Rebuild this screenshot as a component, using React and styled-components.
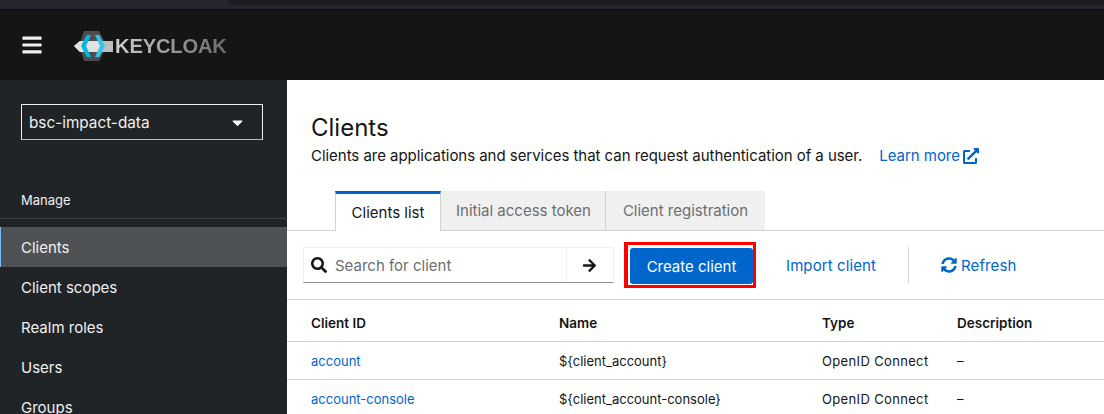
import styled, { createGlobalStyle } from "styled-components";
import { FaBars, FaCaretDown, FaSearch, FaArrowRight, FaExternalLinkAlt, FaSyncAlt } from "react-icons/fa";

const GlobalStyle = createGlobalStyle`
  html, body {
    margin: 0;
    padding: 0;
    height: 414px;
    overflow: hidden;
    background: #fff;
    font-family: "Inter", "Liberation Sans", sans-serif;
    font-size: 15px;
    color: #151515;
  }
  * { box-sizing: border-box; }
`;

const Page = styled.div`
  width: 1104px;
  height: 414px;
  display: flex;
  flex-direction: column;
  overflow: hidden;
`;

const BrowserStrip = styled.div`
  height: 10px;
  flex: none;
  background: #26262e;
  border-bottom: 1px solid #0c0c0c;
  display: flex;
  justify-content: flex-end;
`;

const BrowserTab = styled.div`
  width: 876px;
  height: 5px;
  background: #1c1c22;
  border-bottom-left-radius: 5px;
`;

const Masthead = styled.header`
  height: 70px;
  flex: none;
  background: #151515;
  display: flex;
  align-items: center;
  padding-left: 21px;
  gap: 31px;
  color: #f0f0f0;
`;

const Logo = styled.div`
  display: flex;
  align-items: center;
  padding-top: 3px;
`;

const LogoText = styled.span`
  font-family: "Liberation Sans", sans-serif;
  font-weight: 700;
  font-size: 20.2px;
  letter-spacing: -0.2px;
  background: linear-gradient(90deg, #cfcfcf 0%, #9a9a9a 50%, #6a6a6a 100%);
  -webkit-background-clip: text;
  background-clip: text;
  color: transparent;
  margin-left: 1px;
`;

const Body = styled.div`
  flex: 1;
  display: flex;
  min-height: 0;
`;

const Sidebar = styled.aside`
  width: 287px;
  flex: none;
  background: #212427;
  padding-top: 24px;
  color: #f0f0f0;
`;

const RealmSelect = styled.div`
  width: 242px;
  height: 36px;
  margin-left: 21px;
  border: 1px solid #f0f0f0;
  border-bottom-color: #b8bbbe;
  display: flex;
  align-items: center;
  justify-content: space-between;
  padding: 0 16px 0 7px;
  font-size: 15.3px;
  svg { font-size: 17px; color: #fff; }
`;

const NavGroupTitle = styled.div`
  margin-top: 48px;
  height: 31px;
  padding: 4px 0 0 21px;
  font-size: 13px;
  border-bottom: 1px solid #3c3f42;
`;

const NavList = styled.nav`
  margin-top: 8px;
  display: flex;
  flex-direction: column;
`;

const NavItem = styled.a`
  height: 40px;
  display: flex;
  align-items: center;
  padding-left: ${(p) => (p.$active ? "20px" : "21px")};
  font-size: 15px;
  background: ${(p) => (p.$active ? "#4f5255" : "transparent")};
  border-left: ${(p) => (p.$active ? "1px solid #73bcf7" : "none")};
`;

const Main = styled.main`
  flex: 1;
  min-width: 0;
  background: #fff;
`;

const PageHead = styled.section`
  padding: 33px 24px 0;
  height: 111px;
`;

const Title = styled.h1`
  margin: 0;
  font-size: 24px;
  line-height: 29px;
  font-weight: 400;
`;

const Subtitle = styled.p`
  margin: 3px 0 0;
  font-size: 15px;
  line-height: 22px;
  letter-spacing: -0.04px;
  display: flex;
  align-items: center;
`;

const LearnMore = styled.a`
  color: #06c;
  margin-left: 17px;
  display: inline-flex;
  align-items: center;
  gap: 3px;
  svg { font-size: 16px; }
`;

const Tabs = styled.div`
  height: 40px;
  padding-left: 48px;
  display: flex;
  border-bottom: 1px solid #d2d2d2;
`;

const Tab = styled.div`
  width: ${(p) => p.$width}px;
  height: ${(p) => (p.$active ? "40px" : "39px")};
  display: flex;
  align-items: center;
  justify-content: center;
  font-size: 15px;
  background: ${(p) => (p.$active ? "#fff" : "#f0f0f0")};
  color: ${(p) => (p.$active ? "#151515" : "#6a6e73")};
  border-top: ${(p) => (p.$active ? "3px solid #06c" : "none")};
  border-left: 1px solid ${(p) => (p.$active ? "#d2d2d2" : "transparent")};
  border-right: 1px solid ${(p) => (p.$last ? "transparent" : "#d2d2d2")};
`;

const Toolbar = styled.div`
  height: 69px;
  padding-left: 16px;
  display: flex;
  align-items: center;
  border-bottom: 1px solid #d2d2d2;
`;

const SearchGroup = styled.div`
  width: 311px;
  height: 36px;
  display: flex;
  border: 1px solid #f0f0f0;
  border-bottom-color: #8a8d90;
`;

const SearchField = styled.div`
  flex: 1;
  display: flex;
  align-items: center;
  padding-left: 7px;
  gap: 8px;
  color: #6a6e73;
  font-size: 15px;
  svg { font-size: 16px; color: #151515; }
`;

const SearchButton = styled.div`
  width: 47px;
  padding-right: 2px;
  display: flex;
  align-items: center;
  justify-content: center;
  border-left: 1px solid #f0f0f0;
  svg { font-size: 15px; color: #151515; }
`;

/* the red box is drawn on the screenshot itself, square and a bit lopsided */
const Highlight = styled.div`
  margin-left: 10px;
  padding: 3px 0 1px 2px;
  border: 3px solid #f00;
  border-left-width: 4px;
  display: flex;
`;

const PrimaryButton = styled.button`
  width: 123px;
  height: 36px;
  background: #06c;
  border: none;
  border-radius: 3px;
  color: #fff;
  font: inherit;
  font-size: 15px;
`;

const LinkButton = styled.a`
  color: #06c;
  font-size: 15px;
  letter-spacing: 0.1px;
  display: inline-flex;
  align-items: center;
  gap: 4px;
  margin-left: ${(p) => p.$left}px;
  svg { font-size: 16px; }
`;

const Separator = styled.div`
  width: 1px;
  height: 36px;
  background: #d2d2d2;
  margin-left: 32px;
`;

const Table = styled.div`
  display: flex;
  flex-direction: column;
`;

const Row = styled.div`
  display: grid;
  grid-template-columns: 248px 263px 135px 1fr;
  padding-left: 24px;
  align-items: center;
  height: 38px;
  border-bottom: 1px solid #d2d2d2;
  font-size: 13px;
`;

const HeadRow = styled(Row)`
  height: 42px;
  padding-top: 4px;
  font-size: 13.5px;
  font-weight: 600;
`;

const ClientLink = styled.a`
  color: #06c;
`;

const TypeCell = styled.span`
  letter-spacing: 0.35px;
`;

const navItems = ["Clients", "Client scopes", "Realm roles", "Users", "Groups"];

const clients = [
  { id: "account", name: "${client_account}", type: "OpenID Connect", description: "–" },
  { id: "account-console", name: "${client_account-console}", type: "OpenID Connect", description: "–" },
];

function KeycloakMark() {
  return (
    <svg width="40" height="31" viewBox="0 0 40 31">
      <polygon points="10,0 25,0 33,15 25,30 10,30 5,15" fill="#4d4d4d" />
      <polygon points="0,15 6,10 39,10 39,21 6,21" fill="#bdbdbd" />
      <polygon points="0,15 6,10 26,10 26,21 6,21" fill="#e2e2e2" />
      <polygon points="12.7,4 17,4 12,15 17,26 12.7,26 7,15" fill="#00b8e3" />
      <polygon points="21,4 25.3,4 31,15 25.3,26 21,26 26,15" fill="#33c6e9" />
    </svg>
  );
}

export default function App() {
  return (
    <Page>
      <GlobalStyle />
      <BrowserStrip>
        <BrowserTab />
      </BrowserStrip>
      <Masthead>
        <FaBars size={22} />
        <Logo>
          <KeycloakMark />
          <LogoText>KEYCLOAK</LogoText>
        </Logo>
      </Masthead>
      <Body>
        <Sidebar>
          <RealmSelect>
            bsc-impact-data
            <FaCaretDown />
          </RealmSelect>
          <NavGroupTitle>Manage</NavGroupTitle>
          <NavList>
            {navItems.map((item) => (
              <NavItem key={item} $active={item === "Clients"}>{item}</NavItem>
            ))}
          </NavList>
        </Sidebar>
        <Main>
          <PageHead>
            <Title>Clients</Title>
            <Subtitle>
              Clients are applications and services that can request authentication of a user.
              <LearnMore>Learn more <FaExternalLinkAlt /></LearnMore>
            </Subtitle>
          </PageHead>
          <Tabs>
            <Tab $active $width={106}>Clients list</Tab>
            <Tab $width={165}>Initial access token</Tab>
            <Tab $last $width={159}>Client registration</Tab>
          </Tabs>
          <Toolbar>
            <SearchGroup>
              <SearchField>
                <FaSearch />
                Search for client
              </SearchField>
              <SearchButton><FaArrowRight /></SearchButton>
            </SearchGroup>
            <Highlight>
              <PrimaryButton>Create client</PrimaryButton>
            </Highlight>
            <LinkButton $left={30}>Import client</LinkButton>
            <Separator />
            <LinkButton $left={32}><FaSyncAlt /> Refresh</LinkButton>
          </Toolbar>
          <Table>
            <HeadRow>
              <span>Client ID</span>
              <span>Name</span>
              <span>Type</span>
              <span>Description</span>
            </HeadRow>
            {clients.map((c) => (
              <Row key={c.id}>
                <ClientLink>{c.id}</ClientLink>
                <span>{c.name}</span>
                <TypeCell>{c.type}</TypeCell>
                <span>{c.description}</span>
              </Row>
            ))}
          </Table>
        </Main>
      </Body>
    </Page>
  );
}
